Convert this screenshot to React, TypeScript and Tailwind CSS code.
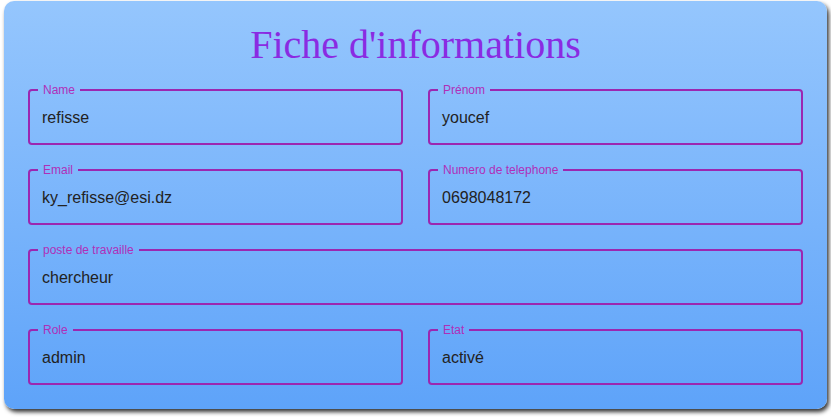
import React from "react";

type Field = { label: string; value: string; full?: boolean };

const fields: Field[] = [
  { label: "Name", value: "refisse" },
  { label: "Prénom", value: "youcef" },
  { label: "Email", value: "ky_refisse@esi.dz" },
  { label: "Numero de telephone", value: "0698048172" },
  { label: "poste de travaille", value: "chercheur", full: true },
  { label: "Role", value: "admin" },
  { label: "Etat", value: "activé" },
];

function OutlinedField({ label, value, full }: Field) {
  return (
    <fieldset
      className={`m-0 h-[62px] min-w-0 rounded-[4px] border-2 border-[#9c27b0] px-[12px] ${full ? "col-span-2" : ""}`}
    >
      <legend className="-ml-[4px] px-[5px] text-[12px] leading-[14px] text-[#b02fb8]">{label}</legend>
      <div className="pt-[11px] text-[16px] leading-[19px] text-[#222]">{value}</div>
    </fieldset>
  );
}

export default function App() {
  return (
    <div className="h-[417px] w-[831px] bg-white pl-[4px] pt-[1px] font-['Liberation_Sans',Arial,sans-serif]">
      <div className="h-[408px] w-[823px] rounded-[10px] bg-linear-to-b from-[#95c6fd] to-[#5ea3f9] px-[24px] pt-[24px] shadow-[2px_3px_4px_rgba(0,0,0,0.8)]">
        <h1 className="mb-[18px] h-[40px] text-center font-['Liberation_Serif',Georgia,serif] text-[40px] leading-[40px] text-[#8a2be2]">
          Fiche d'informations
        </h1>
        <div className="grid grid-cols-2 gap-x-[25px] gap-y-[18px]">
          {fields.map((f) => (
            <OutlinedField key={f.label} {...f} />
          ))}
        </div>
      </div>
    </div>
  );
}
